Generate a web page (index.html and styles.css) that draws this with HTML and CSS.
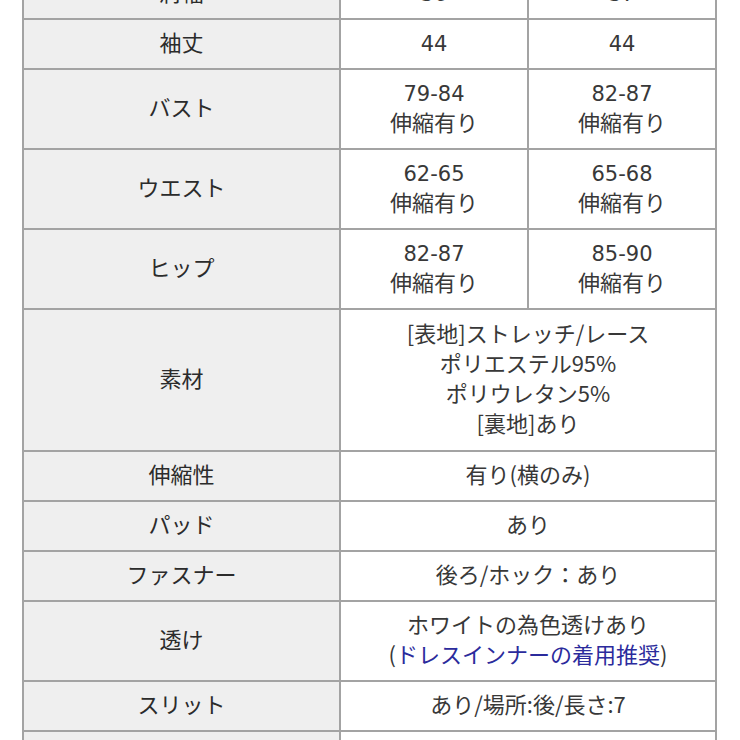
FILE: index.html
```html
<!DOCTYPE html>
<html lang="ja">
<head>
<meta charset="utf-8">
<link rel="stylesheet" href="styles.css">
</head>
<body>
<div class="page">
<table class="spec">
<colgroup><col class="c1"><col class="c2"><col class="c3"></colgroup>
<tbody>
<tr><th>肩幅</th><td><span class="num">36</span></td><td><span class="num">37</span></td></tr>
<tr><th>袖丈</th><td><span class="num">44</span></td><td><span class="num">44</span></td></tr>
<tr><th>バスト</th><td><span class="num">79-84</span><br>伸縮有り</td><td><span class="num">82-87</span><br>伸縮有り</td></tr>
<tr><th>ウエスト</th><td><span class="num">62-65</span><br>伸縮有り</td><td><span class="num">65-68</span><br>伸縮有り</td></tr>
<tr><th>ヒップ</th><td><span class="num">82-87</span><br>伸縮有り</td><td><span class="num">85-90</span><br>伸縮有り</td></tr>
<tr class="tall"><th>素材</th><td colspan="2">[表地]ストレッチ/レース<br>ポリエステル95%<br>ポリウレタン5%<br>[裏地]あり</td></tr>
<tr><th>伸縮性</th><td colspan="2">有り(横のみ)</td></tr>
<tr><th>パッド</th><td colspan="2">あり</td></tr>
<tr><th>ファスナー</th><td colspan="2">後ろ/ホック：あり</td></tr>
<tr><th>透け</th><td colspan="2">ホワイトの為色透けあり<br>(<span class="link">ドレスインナーの着用推奨</span>)</td></tr>
<tr><th>スリット</th><td colspan="2">あり/場所:後/長さ:7</td></tr>
<tr><th>裏地</th><td colspan="2">あり</td></tr>
</tbody>
</table>
</div>
</body>
</html>
```
FILE: styles.css
```css
html, body {
  margin: 0;
  padding: 0;
  background: #ffffff;
}
.page {
  padding-left: 22px;
  overflow: hidden;
  height: 740px;
}
.spec {
  margin-top: -32px;
  border-collapse: collapse;
  width: 695px;
  table-layout: fixed;
  font-family: "Noto Sans CJK JP", sans-serif;
  font-size: 22px;
  color: #383838;
}
.c1 { width: 317px; }
.c2 { width: 188px; }
.c3 { width: 188px; }
.spec th, .spec td {
  border: 2px solid #a3a3a3;
  padding: 6px 4px 12px;
  line-height: 30px;
  text-align: center;
  vertical-align: middle;
  font-weight: normal;
}
.spec th {
  background: #efefef;
  color: #2b2b2b;
}
.spec td {
  background: #ffffff;
}
.num {
  font-family: "DejaVu Sans", sans-serif;
  font-size: 21px;
  line-height: 0;
}
.tall td, .tall th {
  padding-top: 7px;
  padding-bottom: 13px;
}
.link {
  color: #2b2b9c;
}
```
